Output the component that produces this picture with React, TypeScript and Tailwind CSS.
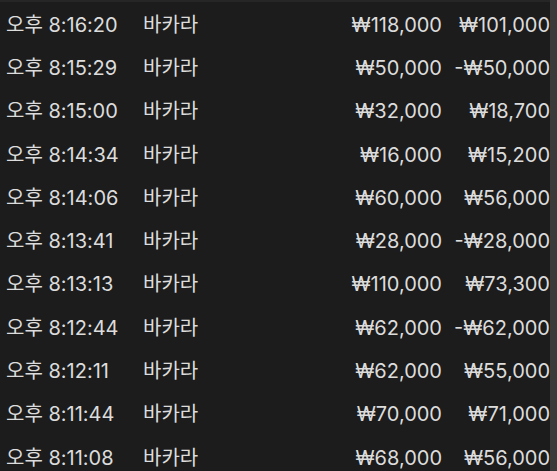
const rows: [string, string, string][] = [
  ["오후 8:16:20", "₩118,000", "₩101,000"],
  ["오후 8:15:29", "₩50,000", "-₩50,000"],
  ["오후 8:15:00", "₩32,000", "₩18,700"],
  ["오후 8:14:34", "₩16,000", "₩15,200"],
  ["오후 8:14:06", "₩60,000", "₩56,000"],
  ["오후 8:13:41", "₩28,000", "-₩28,000"],
  ["오후 8:13:13", "₩110,000", "₩73,300"],
  ["오후 8:12:44", "₩62,000", "-₩62,000"],
  ["오후 8:12:11", "₩62,000", "₩55,000"],
  ["오후 8:11:44", "₩70,000", "₩71,000"],
  ["오후 8:11:08", "₩68,000", "₩56,000"],
];

export default function App() {
  return (
    <div
      className="flex h-[471px] w-[557px] overflow-hidden bg-[#1c1c1c] text-[20px] text-[#dcdcdc]"
      style={{ fontFamily: 'Inter, "Noto Sans CJK KR", sans-serif' }}
    >
      <div className="flex-1 border-t-2 border-[#262626] pt-[1px]">
        {rows.map(([time, a, b], i) => (
          <div key={i} className="flex h-[43.3px] items-center pl-[6px]">
            <span className="w-[137px] whitespace-nowrap">{time}</span>
            <span className="w-[110px]">바카라</span>
            <span className="w-[189px] text-right">{a}</span>
            <span className="w-[108px] whitespace-nowrap text-right">{b}</span>
          </div>
        ))}
      </div>
      <div className="w-[7px] bg-[#3a3a3a]" />
    </div>
  );
}
